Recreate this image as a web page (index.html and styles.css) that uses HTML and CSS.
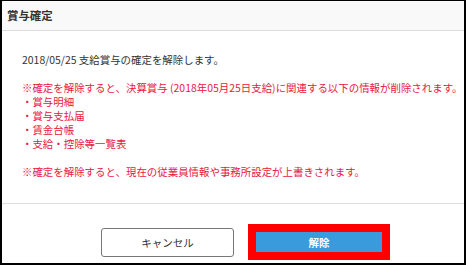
FILE: index.html
```html
<!DOCTYPE html>
<html lang="ja">
  <head>
    <meta charset="UTF-8" />
    <meta name="viewport" content="width=device-width, initial-scale=1.0" />
    <title>賞与確定</title>
    <link rel="stylesheet" href="styles.css">
  </head>
  <body>
    <div class="dialog">
      <!-- Header -->
      <div class="dialog-header">賞与確定</div>

      <!-- Body -->
      <div class="dialog-body">
        <p>2018/05/25 支給賞与の確定を解除します。</p>
        <p class="warn">
          ※確定を解除すると、決算賞与 (2018年05月25日支給)に関連する以下の情報が削除されます。<br />
          ・賞与明細<br />
          ・賞与支払届<br />
          ・賃金台帳<br />
          ・支給・控除等一覧表
        </p>
        <p class="warn">※確定を解除すると、現在の従業員情報や事務所設定が上書きされます。</p>
      </div>

      <!-- Footer -->
      <div class="dialog-footer">
        <button type="button" class="btn-cancel">キャンセル</button>
        <button type="button" class="btn-submit">解除</button>
      </div>
    </div>
  </body>
</html>
```

FILE: styles.css
```css
body {
  margin: 0;
  font-family: "Noto Sans CJK JP", "Noto Sans", sans-serif;
  color: #333;
}
.dialog {
  width: 466px;
  height: 265px;
  box-sizing: border-box;
  border: 2px solid #000;
  border-top-width: 1px;
  background: #fff;
  overflow: hidden;
}
.dialog-header {
  height: 29px;
  line-height: 29px;
  padding-left: 5px;
  background: #f9f9f9;
  border-bottom: 1px solid #ddd;
  font-size: 11.4px;
  font-weight: bold;
}
.dialog-body {
  padding: 22px 2px 24px 20px;
  border-bottom: 1px solid #ddd;
  font-size: 10.45px;
  line-height: 14px;
}
.dialog-body p {
  margin: 0 0 14px;
  white-space: nowrap;
}
.dialog-body p:last-child {
  margin-bottom: 0;
}
.warn {
  color: #e8173e;
}
.dialog-footer {
  display: flex;
  align-items: center;
  gap: 14px;
  padding: 20px 0 0 99px;
}
.btn-cancel {
  width: 133px;
  height: 29px;
  background: #fff;
  border: 1px solid #777;
  border-radius: 3px;
  color: #333;
  font-family: inherit;
  font-size: 10.5px;
  cursor: pointer;
}
.btn-submit {
  width: 142px;
  height: 36px;
  box-sizing: border-box;
  background: #3a9bdc;
  border: 8px solid #f00;
  color: #fff;
  font-family: inherit;
  font-size: 10.5px;
  font-weight: bold;
  cursor: pointer;
}
```
